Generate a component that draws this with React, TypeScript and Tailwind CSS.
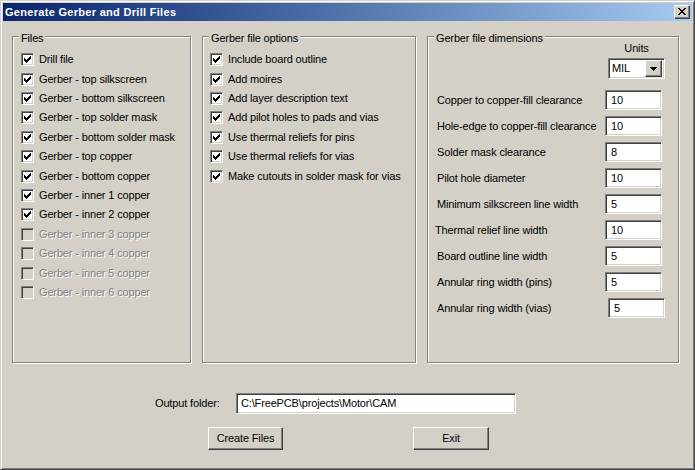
const font = "font-['Liberation_Sans',Arial,sans-serif]";

const sunken =
  "border border-t-[#808080] border-l-[#808080] border-r-white border-b-white shadow-[inset_1px_1px_0_#404040,inset_-1px_-1px_0_#d4d0c8]";
const raised =
  "border border-t-white border-l-white border-r-[#404040] border-b-[#404040] shadow-[inset_-1px_-1px_0_#808080]";

function CheckMark() {
  // classic 7x7 pixel check
  const px = [
    [6, 0],
    [5, 1], [6, 1],
    [0, 2], [4, 2], [5, 2], [6, 2],
    [0, 3], [1, 3], [3, 3], [4, 3], [5, 3],
    [0, 4], [1, 4], [2, 4], [3, 4], [4, 4],
    [1, 5], [2, 5], [3, 5],
    [2, 6],
  ];
  return (
    <svg width="7" height="7" viewBox="0 0 7 7" shapeRendering="crispEdges" className="block">
      {px.map(([x, y]) => (
        <rect key={`${x}-${y}`} x={x} y={y} width="1" height="1" fill="#000" />
      ))}
    </svg>
  );
}

function CloseGlyph() {
  const rows = [
    "XX....XX",
    ".XX..XX.",
    "..XXXX..",
    "...XX...",
    "..XXXX..",
    ".XX..XX.",
    "XX....XX",
  ];
  return (
    <svg width="8" height="7" viewBox="0 0 8 7" shapeRendering="crispEdges" className="block">
      {rows.map((r, y) =>
        r.split("").map((c, x) =>
          c === "X" ? <rect key={`${x}-${y}`} x={x} y={y} width="1" height="1" fill="#000" /> : null
        )
      )}
    </svg>
  );
}

function CheckRow({ label, checked, disabled }: { label: string; checked?: boolean; disabled?: boolean }) {
  return (
    <div className="flex h-[19.42px] items-center">
      <div
        className={`flex h-[13px] w-[13px] shrink-0 items-center justify-center ${sunken} ${
          disabled ? "bg-[#d4d0c8]" : "bg-white"
        }`}
      >
        {checked && <CheckMark />}
      </div>
      <span
        className={`ml-[5px] leading-[13px] ${
          disabled ? "text-[#808080] [text-shadow:1px_1px_0_#fff]" : "text-black"
        }`}
      >
        {label}
      </span>
    </div>
  );
}

function Group({ title, className, children }: { title: string; className: string; children: React.ReactNode }) {
  return (
    <div
      className={`relative h-[327px] border border-[#808080] shadow-[inset_1px_1px_0_#fff,1px_1px_0_#fff] ${className}`}
    >
      <span className="absolute -top-[5px] left-[6px] bg-[#d4d0c8] px-[2px] leading-[13px]">{title}</span>
      {children}
    </div>
  );
}

function Field({ value, className = "" }: { value: string; className?: string }) {
  return (
    <div className={`flex h-[20px] w-[57px] items-center bg-white pl-[5px] ${sunken} ${className}`}>
      <span className="leading-[13px]">{value}</span>
    </div>
  );
}

const files = [
  { label: "Drill file", checked: true },
  { label: "Gerber - top silkscreen", checked: true },
  { label: "Gerber - bottom silkscreen", checked: true },
  { label: "Gerber - top solder mask", checked: true },
  { label: "Gerber - bottom solder mask", checked: true },
  { label: "Gerber - top copper", checked: true },
  { label: "Gerber - bottom copper", checked: true },
  { label: "Gerber - inner 1 copper", checked: true },
  { label: "Gerber - inner 2 copper", checked: true },
  { label: "Gerber - inner 3 copper", disabled: true },
  { label: "Gerber - inner 4 copper", disabled: true },
  { label: "Gerber - inner 5 copper", disabled: true },
  { label: "Gerber - inner 6 copper", disabled: true },
];

const options = [
  "Include board outline",
  "Add moires",
  "Add layer description text",
  "Add pilot holes to pads and vias",
  "Use thermal reliefs for pins",
  "Use thermal reliefs for vias",
  "Make cutouts in solder mask for vias",
];

const dims = [
  { label: "Copper to copper-fill clearance", value: "10" },
  { label: "Hole-edge to copper-fill clearance", value: "10" },
  { label: "Solder mask clearance", value: "8" },
  { label: "Pilot hole diameter", value: "10" },
  { label: "Minimum silkscreen line width", value: "5" },
  { label: "Thermal relief line width", value: "10", shift: true },
  { label: "Board outline line width", value: "5" },
  { label: "Annular ring width (pins)", value: "5" },
  { label: "Annular ring width (vias)", value: "5", last: true },
];

export default function App() {
  return (
    <div
      className={`h-[470px] w-[695px] border border-t-[#d4d0c8] border-l-[#d4d0c8] border-r-[#404040] border-b-[#404040] bg-[#d4d0c8] p-[2px] text-[11px] tracking-[-0.15px] text-black shadow-[inset_1px_1px_0_#fff,inset_-1px_-1px_0_#808080] ${font}`}
    >
      {/* title bar */}
      <div className="flex h-[18px] items-center justify-between bg-linear-to-r from-[#0a246a] to-[#a6caf0] pl-[2px] pr-[2px]">
        <span className="text-[11px] font-bold leading-[13px] tracking-[0.3px] text-white">
          Generate Gerber and Drill Files
        </span>
        <div className={`flex h-[14px] w-[16px] items-start justify-start bg-[#d4d0c8] pl-[3px] pt-[2px] ${raised}`}>
          <CloseGlyph />
        </div>
      </div>

      {/* groups */}
      <div className="mt-[15px] flex gap-[11px] pl-[9px]">
        <Group title="Files" className="w-[179px]">
          <div className="flex flex-col pl-[8px] pt-[13px]">
            {files.map((f) => (
              <CheckRow key={f.label} label={f.label} checked={f.checked} disabled={f.disabled} />
            ))}
          </div>
        </Group>

        <Group title="Gerber file options" className="w-[214px]">
          <div className="flex flex-col pl-[7px] pt-[13px]">
            {options.map((o) => (
              <CheckRow key={o} label={o} checked />
            ))}
          </div>
        </Group>

        <Group title="Gerber file dimensions" className="w-[252px]">
          <div className="flex flex-col pl-[9px] pr-[16px]">
            <div className="-mr-[3px] mt-[5px] flex justify-end">
              <div className="flex w-[57px] flex-col items-center">
                <span className="leading-[13px]">Units</span>
                <div className={`mt-[3px] flex h-[21px] w-[57px] items-center justify-between bg-white pl-[3px] pr-[2px] ${sunken}`}>
                  <span className="leading-[13px]">MIL</span>
                  <div className={`flex h-[17px] w-[17px] items-center justify-center bg-[#d4d0c8] ${raised}`}>
                    <svg width="7" height="4" viewBox="0 0 7 4" shapeRendering="crispEdges" className="block">
                      <rect x="0" y="0" width="7" height="1" fill="#000" />
                      <rect x="1" y="1" width="5" height="1" fill="#000" />
                      <rect x="2" y="2" width="3" height="1" fill="#000" />
                      <rect x="3" y="3" width="1" height="1" fill="#000" />
                    </svg>
                  </div>
                </div>
              </div>
            </div>
            <div className="mt-[11px] flex flex-col gap-[6px]">
              {dims.map((d) => (
                <div key={d.label} className="flex h-[20px] items-center justify-between">
                  <span className={`leading-[13px] ${d.shift ? "-ml-[2px]" : ""}`}>{d.label}</span>
                  <Field value={d.value} className={d.last ? "-mr-[3px]" : ""} />
                </div>
              ))}
            </div>
          </div>
        </Group>
      </div>

      {/* output folder */}
      <div className="mt-[30px] flex items-center pl-[152px]">
        <span className="w-[81px] leading-[13px]">Output folder:</span>
        <div className={`flex h-[21px] w-[280px] items-center bg-white pl-[4px] ${sunken}`}>
          <span className="leading-[13px]">C:\FreePCB\projects\Motor\CAM</span>
        </div>
      </div>

      {/* buttons */}
      <div className="mt-[13px] flex pl-[205px]">
        <button className={`flex h-[23px] w-[75px] items-center justify-center bg-[#d4d0c8] ${raised}`}>
          Create Files
        </button>
        <button className={`ml-[130px] flex h-[23px] w-[76px] items-center justify-center bg-[#d4d0c8] ${raised}`}>
          Exit
        </button>
      </div>
    </div>
  );
}
